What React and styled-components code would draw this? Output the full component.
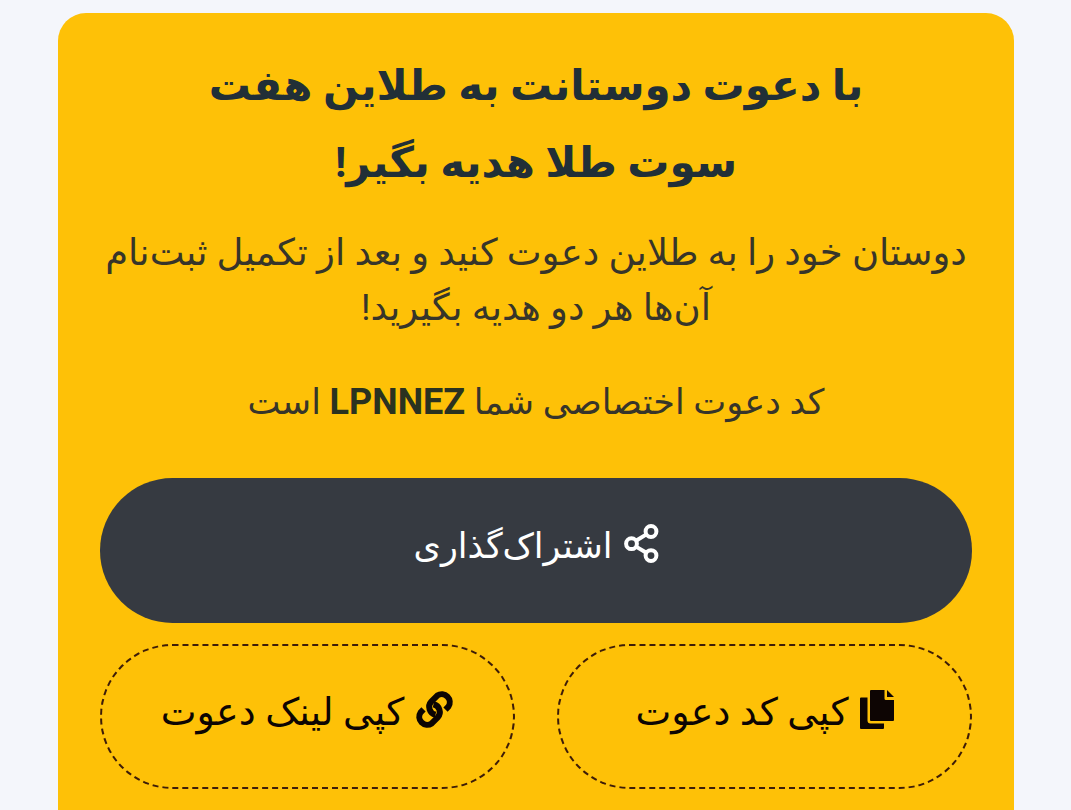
import React from 'react';
import styled, { createGlobalStyle } from 'styled-components';

const GlobalStyle = createGlobalStyle`
  *, *::before, *::after { box-sizing: border-box; }
  body {
    margin: 0;
    background: #f4f6fb;
    color: #212f37;
    font-family: Roboto, "DejaVu Sans", sans-serif;
  }
`;

const Page = styled.main`
  padding: 13px 57px 0 58px;
  overflow: hidden;
  height: 100vh;
`;

const Card = styled.section`
  min-height: 100%;
  padding: 34px 42px 42px;
  border-radius: 28px 28px 0 0;
  background: #fec107;
  text-align: center;
`;

const Title = styled.h1`
  margin: 0;
  font-size: 42px;
  line-height: 77px;
  font-weight: 700;
`;

const Text = styled.p`
  margin: 24px 0 0;
  font-size: 37px;
  line-height: 55px;
  color: #37352a;
`;

const Code = styled(Text)`
  margin-top: 40px;
  font-size: 35px;
`;

const CodeValue = styled.strong`
  font-size: 36px;
  font-weight: 700;
  color: #2a3220;
`;

const Actions = styled.div`
  display: grid;
  grid-template-columns: 1fr 1fr;
  gap: 21px 42px;
  margin-top: 48px;
`;

const Button = styled.button`
  display: flex;
  align-items: center;
  justify-content: center;
  gap: 11px;
  height: 145px;
  padding: 0 0 15px;
  border: 2px dashed #3d1c08;
  border-radius: 73px;
  background: transparent;
  color: #0d0503;
  font-family: inherit;
  font-size: 38px;
  cursor: pointer;
`;

const ShareButton = styled(Button)`
  grid-column: 1 / -1;
  border: 0;
  background: #363a41;
  color: #fff;
  font-size: 35px;
`;

const Label = styled.span`
  padding-top: 6px;
`;

const ShareIcon = () => (
  <svg width="35" height="39" viewBox="0 0 35 39" fill="none" stroke="currentColor" strokeWidth="4" aria-hidden="true">
    <circle cx="27" cy="7.5" r="5.4" />
    <circle cx="7.5" cy="19.7" r="5.4" />
    <circle cx="27" cy="31.6" r="5.4" />
    <path d="M12 16.8 22.4 10.4M12 22.6 22.4 28.8" />
  </svg>
);

const CopyIcon = () => (
  <svg width="34" height="39" viewBox="0 0 34 39" fill="currentColor" aria-hidden="true">
    <path d="M1 7.500H7.500V30.500Q7.500 33.500 10.500 33.500H24V38Q24 39 23 39H1Q0 39 0 38V8.500Q0 7.500 1 7.500z" />
    <path d="M11 0H24.500V8.500Q24.500 10 26 10H34V30Q34 31 33 31H11Q10 31 10 30V1Q10 0 11 0z" />
    <path d="M27 0l7 7h-7z" />
  </svg>
);

const LinkIcon = () => (
  <svg width="39" height="39" viewBox="0 0 39 39" fill="none" stroke="currentColor" strokeWidth="6" aria-hidden="true">
    <path d="M20.500 24.800A8 8 0 0 1 16.300 11.600L22.300 5.600A8 8 0 0 1 33.400 16.700L30.500 19.600" />
    <path d="M18.500 14.200A8 8 0 0 1 22.700 27.400L16.700 33.400A8 8 0 0 1 5.600 22.300L8.500 19.400" />
  </svg>
);

export default function App() {
  return (
    <Page dir="rtl" lang="fa">
      <GlobalStyle />
      <Card>
        <Title>با دعوت دوستانت به طلاین هفت<br />سوت طلا هدیه بگیر!</Title>
        <Text>دوستان خود را به طلاین دعوت کنید و بعد از تکمیل ثبت‌نام<br />آن‌ها هر دو هدیه بگیرید!</Text>
        <Code>کد دعوت اختصاصی شما <CodeValue>LPNNEZ</CodeValue> است</Code>
        <Actions>
          <ShareButton type="button"><ShareIcon /><Label>اشتراک‌گذاری</Label></ShareButton>
          <Button type="button"><CopyIcon /><Label>کپی کد دعوت</Label></Button>
          <Button type="button"><LinkIcon /><Label>کپی لینک دعوت</Label></Button>
        </Actions>
      </Card>
    </Page>
  );
}
